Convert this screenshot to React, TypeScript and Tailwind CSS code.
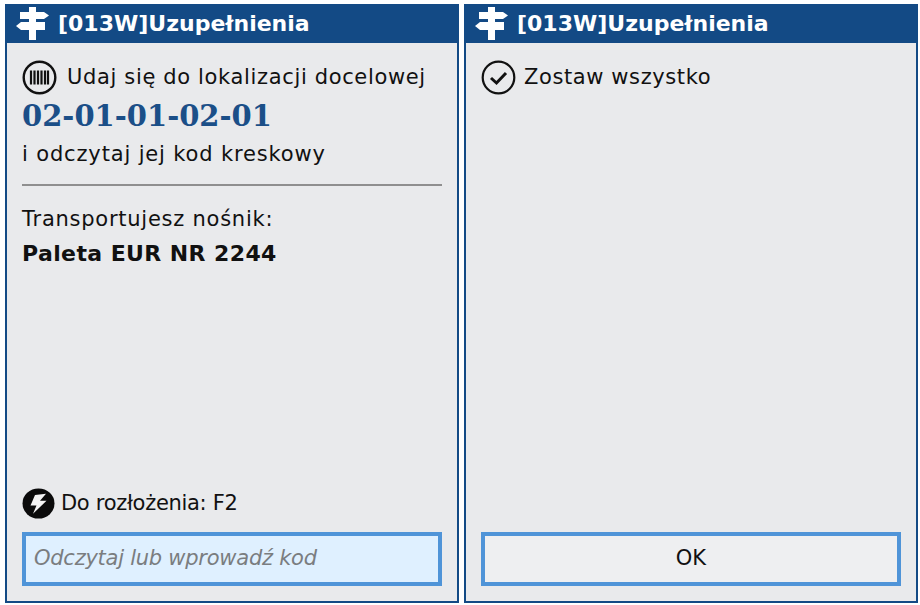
import React from "react";

function Signpost() {
  return (
    <svg width="33" height="33" viewBox="0 0 33 33" className="shrink-0">
      <path d="M13 0h7v33h-7z" fill="#fff" />
      <path d="M4 5h24l5 3.5-5 3.5H4z" fill="#fff" />
      <path d="M29 15H5l-5 4 5 4h24z" fill="#fff" />
    </svg>
  );
}

function Header() {
  return (
    <div className="h-[39px] bg-[#134a85] flex items-center pl-[9px] gap-[9px] shrink-0">
      <Signpost />
      <span className="font-bold text-[22px] text-white leading-none whitespace-nowrap">
        [013W]Uzupełnienia
      </span>
    </div>
  );
}

function Barcode() {
  return (
    <svg width="35" height="35" viewBox="0 0 35 35" className="shrink-0">
      <circle cx="17.5" cy="17.5" r="15.8" fill="none" stroke="#111" strokeWidth="2.4" />
      <path d="M9 10.5v14M12.5 10.5v14M16 10.5v14M19.5 10.5v14M23 10.5v14M26 10.5v14" stroke="#111" strokeWidth="2.2" fill="none" />
    </svg>
  );
}

function Check() {
  return (
    <svg width="35" height="35" viewBox="0 0 35 35" className="shrink-0">
      <circle cx="17.5" cy="17.5" r="15.8" fill="none" stroke="#111" strokeWidth="2.2" />
      <path d="M10 18l5.5 5 9.5-10" stroke="#111" strokeWidth="3" fill="none" />
    </svg>
  );
}

function Bolt() {
  return (
    <svg width="33" height="31" viewBox="0 0 33 33" preserveAspectRatio="none" className="shrink-0">
      <circle cx="16.5" cy="16.5" r="16" fill="#0b0b0b" />
      <path d="M24 6L13 7.5 8.5 18.5h6L11 27.5 24.5 13.5h-6.5L24 6z" fill="#f4f4f4" />
    </svg>
  );
}

export default function App() {
  return (
    <div className="w-[920px] h-[605px] bg-white flex gap-[5px] pl-[5px] pt-[4px] overflow-hidden font-['DejaVu_Sans',sans-serif] text-[#111]">
      <div className="w-[454px] h-[599px] border-2 border-t-0 border-[#134a85] bg-[#e9eaec] flex flex-col">
        <Header />
        <div className="flex-1 flex flex-col px-[15px] pt-[17px] pb-[15px]">
          <div className="flex items-center gap-[10px] h-[35px] text-[21px] tracking-[0.65px] whitespace-nowrap">
            <Barcode />
            <span>Udaj się do lokalizacji docelowej</span>
          </div>
          <div className="font-['DejaVu_Serif',serif] font-bold text-[29px] leading-[40px] mt-[1px] mb-[1px] text-[#1b4f88]">
            02-01-01-02-01
          </div>
          <div className="text-[21px] leading-[32px] mt-[1px] tracking-[0.85px]">i odczytaj jej kod kreskowy</div>
          <div className="h-[2px] bg-[#8f8f8f] mt-[14px]" />
          <div className="text-[21px] leading-[30px] mt-[18px] tracking-[0.75px]">Transportujesz nośnik:</div>
          <div className="text-[22px] leading-[30px] mt-[5px] font-bold tracking-[0.4px]">Paleta EUR NR 2244</div>
          <div className="mt-auto flex items-center gap-[6px] h-[33px] text-[21px] tracking-[-0.3px]">
            <Bolt />
            <span className="whitespace-nowrap">Do rozłożenia: F2</span>
          </div>
          <div className="mt-[12px] h-[54px] border-[4px] border-[#4f94d8] bg-[#dff0ff] flex items-center pl-[8px] text-[21px] italic text-[#7a7d80] tracking-[-0.25px] whitespace-nowrap">
            Odczytaj lub wprowadź kod
          </div>
        </div>
      </div>
      <div className="w-[454px] h-[599px] border-2 border-t-0 border-[#134a85] bg-[#e9eaec] flex flex-col">
        <Header />
        <div className="flex-1 flex flex-col px-[15px] pt-[17px] pb-[15px]">
          <div className="flex items-center gap-[8px] h-[35px] text-[21px] tracking-[0.6px] whitespace-nowrap">
            <Check />
            <span>Zostaw wszystko</span>
          </div>
          <button className="mt-auto h-[54px] border-[4px] border-[#4f94d8] bg-[#eeeff1] text-[21px] text-[#111]">OK</button>
        </div>
      </div>
    </div>
  );
}
